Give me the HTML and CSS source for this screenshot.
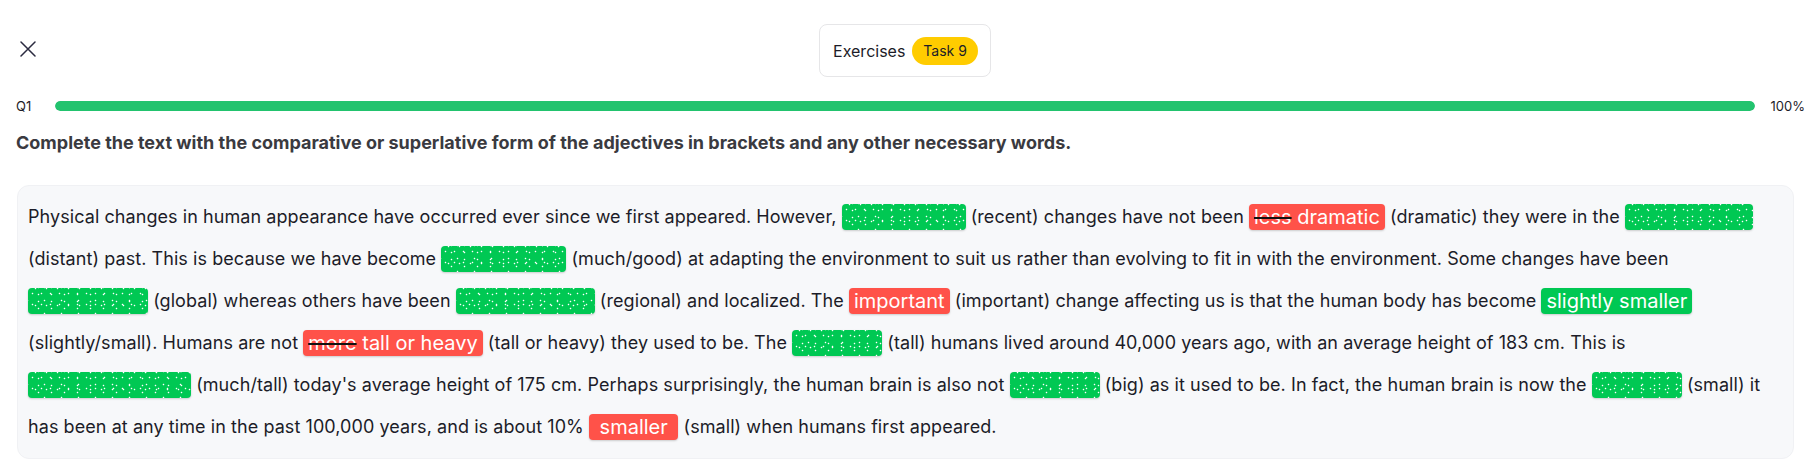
FILE: index.html
```html
<!DOCTYPE html>
<html lang="en">
<head>
<meta charset="utf-8">
<title>Exercises - Task 9</title>
<link rel="stylesheet" href="styles.css">
</head>
<body>
<div class="page">
  <header class="topbar">
    <button class="close" aria-label="Close">
      <svg width="16" height="16" viewBox="0 0 16 16" fill="none" stroke="#2b2b40" stroke-width="1.5" stroke-linecap="round"><path d="M1 1L15 15M15 1L1 15"/></svg>
    </button>
    <div class="title-box">
      <span class="title">Exercises</span>
      <span class="task-pill">Task 9</span>
    </div>
    <div class="spacer"></div>
  </header>

  <div class="progress-row">
    <span class="q-label">Q1</span>
    <div class="track"><div class="fill" style="width:100%"></div></div>
    <span class="pct">100%</span>
  </div>

  <p class="instruction">Complete the text with the comparative or superlative form of the adjectives in brackets and any other necessary words.</p>

  <div class="text-card">
    <p class="passage">Physical changes in human appearance have occurred ever since we first appeared. However, <span class="blank" style="width:124px"></span> (recent) changes have not been <span class="ans wrong"><s>less</s> dramatic</span> (dramatic) they were in the <span class="blank" style="width:128px"></span> (distant) past. This is because we have become <span class="blank" style="width:125px"></span> (much/good) at adapting the environment to suit us rather than evolving to fit in with the environment. Some changes have been <span class="blank" style="width:120px"></span> (global) whereas others have been <span class="blank" style="width:139px"></span> (regional) and localized. The <span class="ans wrong">important</span> (important) change affecting us is that the human body has become <span class="ans right">slightly smaller</span> (slightly/small). Humans are not <span class="ans wrong"><s>more</s> tall or heavy</span> (tall or heavy) they used to be. The <span class="blank" style="width:90px"></span> (tall) humans lived around 40,000 years ago, with an average height of 183 cm. This is <span class="blank" style="width:163px"></span> (much/tall) today's average height of 175 cm. Perhaps surprisingly, the human brain is also not <span class="blank" style="width:90px"></span> (big) as it used to be. In fact, the human brain is now the <span class="blank" style="width:90px"></span> (small) it has been at any time in the past 100,000 years, and is about 10% <span class="ans wrong">&nbsp;smaller&nbsp;</span> (small) when humans first appeared.</p>
  </div>
</div>
</body>
</html>
```

FILE: styles.css
```css
* { box-sizing: border-box; }

html, body {
  margin: 0;
  padding: 0;
  background: #ffffff;
}

body {
  font-family: Inter, "Noto Sans", "Liberation Sans", sans-serif;
  color: #1c1c28;
}

.page {
  padding: 24px 18px 0 16px;
}

.topbar {
  display: grid;
  grid-template-columns: 1fr auto 1fr;
  align-items: center;
}

.close {
  justify-self: start;
  align-self: start;
  margin: 17px 0 0 4px;
  padding: 0;
  border: 0;
  background: none;
  width: 16px;
  height: 16px;
  display: flex;
}

.title-box {
  display: flex;
  align-items: center;
  gap: 7px;
  height: 53px;
  padding: 0 12px 0 13px;
  border: 1px solid #e6e6e8;
  border-radius: 8px;
}

.title {
  font-size: 16px;
  color: #1c1c28;
}

.task-pill {
  display: inline-flex;
  align-items: center;
  justify-content: center;
  height: 28px;
  padding: 0 11px;
  border-radius: 14px;
  background: #ffcc00;
  font-size: 14px;
  color: #1c1c28;
}

.progress-row {
  display: flex;
  align-items: center;
  margin-top: 24px;
  height: 10px;
}

.q-label {
  font-size: 13px;
  color: #1c1c28;
  width: 39px;
  flex: none;
}

.track {
  flex: 1;
  height: 10px;
  border-radius: 5px;
  background: #e8e8ea;
  overflow: hidden;
}

.fill {
  height: 100%;
  background: #22c36e;
  border-radius: 5px;
}

.pct {
  flex: none;
  margin-left: 16px;
  font-size: 13px;
  color: #1c1c28;
  margin-right: -11px;
}

.instruction {
  margin: 20px 0 0 0;
  font-size: 18px;
  font-weight: 700;
  color: #3a3a40;
  line-height: 24px;
}

.text-card {
  margin: 30px 0 15px 1px;
  background: #f7f8fa;
  border: 1px solid #f0f1f4;
  border-radius: 12px;
  padding: 10px 10px;
}

.passage {
  margin: 0;
  font-size: 18px;
  letter-spacing: 0.07px;
  line-height: 42px;
  color: #1c1c28;
}

.blank {
  display: inline-block;
  height: 26px;
  vertical-align: middle;
  border-radius: 4px;
  background-color: #00c853;
  background-image:
    radial-gradient(circle, #ffffff 0.6px, transparent 1.1px),
    radial-gradient(circle, #ffffff 0.6px, transparent 1.1px),
    radial-gradient(circle, #ffffff 0.6px, transparent 1.1px),
    radial-gradient(circle, #ffffff 0.6px, transparent 1.1px);
  background-size: 9px 11px, 13px 7px, 17px 13px, 11px 17px;
  background-position: 0 0, 4px 3px, 8px 6px, 2px 9px;
  box-shadow: 0 1px 2px rgba(0, 0, 0, 0.18);
  position: relative;
  top: -1px;
}

.ans {
  display: inline-block;
  height: 26px;
  line-height: 26px;
  padding: 0 5px;
  border-radius: 4px;
  font-size: 20px;
  letter-spacing: 0;
  color: #ffffff;
  vertical-align: middle;
  box-shadow: 0 1px 2px rgba(0, 0, 0, 0.18);
  position: relative;
  top: -1px;
}

.ans.wrong { background: #ff5249; }
.ans.right { background: #00c853; }

.ans s {
  text-decoration-color: #111111;
  text-decoration-thickness: 2px;
}
```
